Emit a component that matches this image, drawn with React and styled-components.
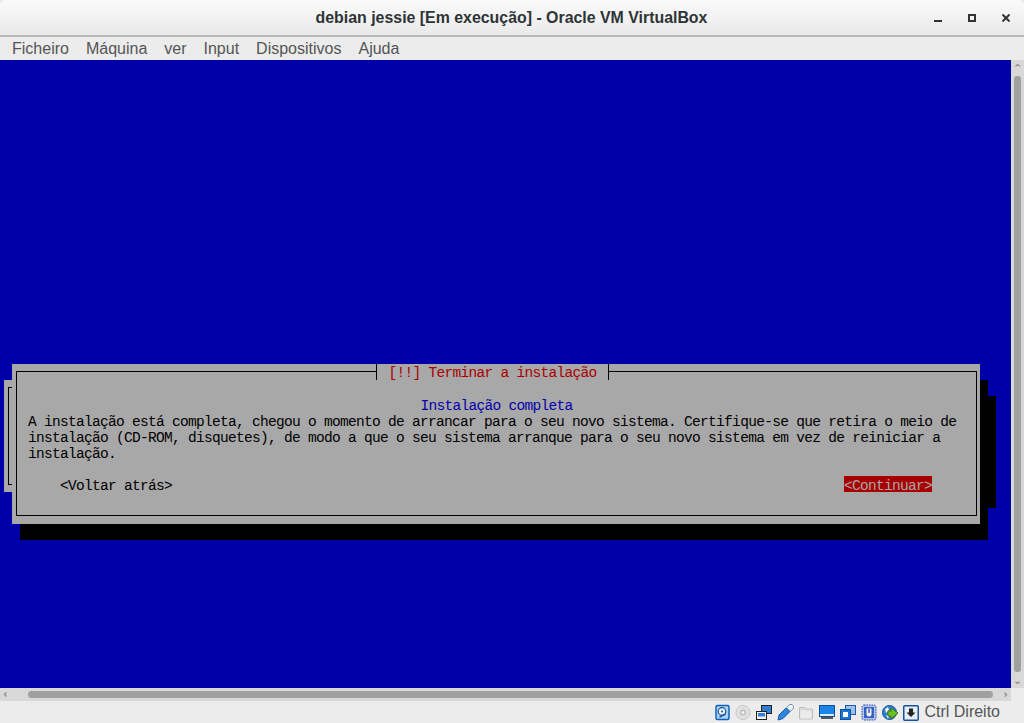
import styled, { createGlobalStyle } from 'styled-components';

const GlobalStyle = createGlobalStyle`
  html, body {
    margin: 0;
    padding: 0;
    height: 100%;
    overflow: hidden;
    background: #ececec;
  }
  #root {
    height: 100%;
  }
`;

const menuItems = ['Ficheiro', 'Máquina', 'ver', 'Input', 'Dispositivos', 'Ajuda'];

const bodyLines = [
  'A instalação está completa, chegou o momento de arrancar para o seu novo sistema. Certifique-se que retira o meio de',
  'instalação (CD-ROM, disquetes), de modo a que o seu sistema arranque para o seu novo sistema em vez de reiniciar a',
  'instalação.',
];

const HardDiskIcon = () => (
  <svg width="16" height="18" viewBox="0 0 16 18">
    <rect x="2" y="2.500" width="13" height="14" rx="1.500" fill="#a9d4f5" stroke="#0f62c0" strokeWidth="1.500" />
    <circle cx="8" cy="8.500" r="3.800" fill="#e6f3fc" stroke="#1c4f8c" strokeWidth="1.200" />
    <circle cx="8" cy="8.500" r="1" fill="#1c4f8c" />
    <path d="M5.500 14l6-3" stroke="#1c4f8c" strokeWidth="1.500" />
  </svg>
);

const DiscIcon = () => (
  <svg width="16" height="18" viewBox="0 0 16 18">
    <circle cx="8" cy="9.500" r="7" fill="#e4e4e4" stroke="#c4c4c4" />
    <circle cx="8" cy="9.500" r="4.500" fill="#d8d8d8" />
    <circle cx="8" cy="9.500" r="2" fill="#f6f6f6" stroke="#b0b0b0" />
  </svg>
);

const NetworkIcon = () => (
  <svg width="16" height="18" viewBox="0 0 16 18">
    <rect x="5.500" y="2.500" width="10" height="8" fill="#2f7fd6" stroke="#222" />
    <rect x="0.500" y="8.500" width="10" height="8" fill="#f2f2f2" stroke="#222" />
    <rect x="2" y="10" width="7" height="3.500" fill="#2f7fd6" />
  </svg>
);

const UsbIcon = () => (
  <svg width="17" height="18" viewBox="0 0 17 18">
    <path d="M1 17l1-5 7-7 4 3.500-7 7z" fill="#2f86e0" stroke="#1558a8" />
    <path d="M9.500 5l3-3.500h2.500l1.500 2v2l-3 2.700z" fill="#eef4fa" stroke="#6c8fb0" />
  </svg>
);

const FolderIcon = () => (
  <svg width="16" height="18" viewBox="0 0 16 18">
    <path d="M1.500 4.500h5l1 1.500h7v10h-13z" fill="#dcdcdc" stroke="#bdbdbd" />
    <rect x="2.500" y="7.500" width="11" height="8" fill="#ebebeb" />
  </svg>
);

const MonitorIcon = () => (
  <svg width="16" height="18" viewBox="0 0 16 18">
    <rect x="0.500" y="2.500" width="15" height="11" fill="#1a84e8" stroke="#0c4f9c" />
    <rect x="1" y="11" width="14" height="2" fill="#dcecfa" />
    <rect x="2" y="14" width="12" height="2" fill="#555" />
  </svg>
);

const DualDisplayIcon = () => (
  <svg width="16" height="18" viewBox="0 0 16 18">
    <rect x="5.500" y="2.500" width="10" height="9" fill="#9cc0ea" stroke="#1b5aa8" />
    <rect x="0.500" y="6.500" width="10" height="10" fill="#1a74d8" stroke="#0c4f9c" />
    <rect x="3" y="9" width="5" height="5" fill="#fff" />
  </svg>
);

const ChipIcon = () => (
  <svg width="16" height="18" viewBox="0 0 16 18">
    <rect x="1" y="2" width="14" height="15" rx="2" fill="#b4c6ee" stroke="#2748a8" strokeDasharray="1.500 1" />
    <rect x="3" y="4" width="10" height="11" fill="#3460c0" />
    <path d="M5.500 5.500v5.500a2.500 2.500 0 0 0 5 0V5.500z" fill="#f4f4f4" />
    <path d="M8 6v4" stroke="#3460c0" strokeWidth="1.500" />
  </svg>
);

const GlobeIcon = () => (
  <svg width="17" height="18" viewBox="0 0 17 18">
    <circle cx="7.500" cy="9.500" r="7" fill="#2f7fd0" stroke="#14539c" />
    <path d="M3 6l3-2 1 3-3 3zM4 12l3 1-1 3z" fill="#e8f0e8" />
    <path d="M9 5l7 5-7 6v-3H6V8h3z" fill="#6cc020" stroke="#3c7a10" />
  </svg>
);

const CaptureIcon = () => (
  <svg width="16" height="18" viewBox="0 0 16 18">
    <rect x="0.750" y="2.750" width="14.500" height="14.500" rx="1" fill="#e8eef5" stroke="#14539c" strokeWidth="1.500" />
    <path d="M6 5.500h4v4h2.500L8 14 3.500 9.500H6z" fill="#222" />
  </svg>
);

const statusIcons = [HardDiskIcon, DiscIcon, NetworkIcon, UsbIcon, FolderIcon, MonitorIcon, DualDisplayIcon, ChipIcon, GlobeIcon, CaptureIcon];

const App = () => {
  return (
    <Window>
      <GlobalStyle />
      <TitleBar>
        <WindowTitle>debian jessie [Em execução] - Oracle VM VirtualBox</WindowTitle>
        <WindowControls>
          <svg width="8" height="8" viewBox="0 0 8 8"><rect y="6" width="8" height="2" fill="#333" /></svg>
          <svg width="8" height="8" viewBox="0 0 8 8"><rect x="1" y="1" width="6" height="6" fill="none" stroke="#333" strokeWidth="2" /></svg>
          <svg width="8" height="8" viewBox="0 0 8 8"><path d="M0.500 0.500l7 7M7.500 0.500l-7 7" stroke="#333" strokeWidth="2" /></svg>
        </WindowControls>
      </TitleBar>
      <MenuBar>
        {menuItems.map((item) => <MenuItem key={item}>{item}</MenuItem>)}
      </MenuBar>
      <ViewArea>
        <Screen>
          <DialogStack>
            <BackDialog>
              <BackFrame />
            </BackDialog>
            <Dialog>
              <Frame>
                <DialogTitle>[!!] Terminar a instalação</DialogTitle>
                <Heading>Instalação completa</Heading>
                {bodyLines.map((line) => <Line key={line}>{line}</Line>)}
                <Buttons>
                  <ConsoleButton>&lt;Voltar atrás&gt;</ConsoleButton>
                  <ConsoleButton $active>&lt;Continuar&gt;</ConsoleButton>
                </Buttons>
              </Frame>
            </Dialog>
          </DialogStack>
        </Screen>
        <VScroll>
          <ScrollArrow>⌃</ScrollArrow>
          <VThumb />
          <ScrollArrow $down>⌃</ScrollArrow>
        </VScroll>
        <HScroll>
          <ScrollArrow $left>⌃</ScrollArrow>
          <HThumb />
          <ScrollArrow $right>⌃</ScrollArrow>
        </HScroll>
        <Corner />
      </ViewArea>
      <StatusBar>
        {statusIcons.map((Icon, i) => <Icon key={i} />)}
        <HostKey>Ctrl Direito</HostKey>
      </StatusBar>
    </Window>
  );
};

const Window = styled.div`
  width: 1024px;
  height: 723px;
  display: flex;
  flex-direction: column;
  background: #ececec;
  overflow: hidden;
`;

const TitleBar = styled.div`
  height: 35px;
  flex: none;
  display: flex;
  align-items: center;
  justify-content: center;
  position: relative;
  background: linear-gradient(#fbfbfb, #e9e9e9);
  border-bottom: 2px solid #b8b8b8;
  border-radius: 6px 6px 0 0;
`;

const WindowTitle = styled.div`
  font: bold 15.9px "Liberation Sans", Arial, sans-serif;
  color: #2e3436;
  padding-right: 1px;
`;

const WindowControls = styled.div`
  position: absolute;
  right: 14px;
  top: 14px;
  display: flex;
  gap: 26px;
`;

const MenuBar = styled.div`
  height: 23px;
  flex: none;
  display: flex;
  align-items: center;
  gap: 17px;
  padding-left: 12px;
  background: #ececec;
`;

const MenuItem = styled.span`
  font: 16px "Liberation Sans", Arial, sans-serif;
  color: #555;
`;

const ViewArea = styled.div`
  height: 641px;
  flex: none;
  display: grid;
  grid-template-columns: 1011px 13px;
  grid-template-rows: 628px 13px;
`;

const Screen = styled.div`
  background: #0000a8;
  padding: 304px 0 0 12px;
  overflow: hidden;
`;

const DialogStack = styled.div`
  position: relative;
  width: 968px;
  z-index: 0;
`;

const BackDialog = styled.div`
  position: absolute;
  z-index: -1;
  left: -8px;
  top: 16px;
  width: 984px;
  height: 112px;
  background: #a8a8a8;
  box-shadow: 8px 16px 0 #000;
  padding: 7px 4px;
  box-sizing: border-box;
`;

const BackFrame = styled.div`
  height: 98px;
  width: 8px;
  border: 1px solid #000;
  border-right: none;
  box-sizing: border-box;
`;

const Dialog = styled.div`
  height: 160px;
  box-sizing: border-box;
  background: #a8a8a8;
  box-shadow: 8px 16px 0 #000;
  padding: 7px 3px 8px 4px;
  font: 14.5px/16px "Liberation Mono", "DejaVu Sans Mono", monospace;
  letter-spacing: -0.7px;
  color: #000;
`;

const Frame = styled.div`
  position: relative;
  height: 145px;
  box-sizing: border-box;
  border: 1px solid #000;
  padding: 26px 0 0 11px;
`;

const DialogTitle = styled.div`
  position: absolute;
  top: -8px;
  left: 359px;
  width: 233px;
  height: 16px;
  box-sizing: border-box;
  padding-top: 1px;
  text-align: center;
  background: #a8a8a8;
  color: #a80000;
  border-left: 1px solid #000;
  border-right: 1px solid #000;
`;

const Heading = styled.div`
  text-align: center;
  color: #0000a8;
  padding-right: 11px;
`;

const Line = styled.div`
  white-space: pre;
`;

const Buttons = styled.div`
  display: flex;
  justify-content: space-between;
  margin-top: 14px;
  padding: 0 44px 0 32px;
`;

const ConsoleButton = styled.span`
  box-sizing: border-box;
  height: 16px;
  padding-top: 2px;
  background: ${(p) => (p.$active ? '#a80000' : 'transparent')};
  color: ${(p) => (p.$active ? '#a8a8a8' : '#000')};
`;

const VScroll = styled.div`
  display: flex;
  flex-direction: column;
  align-items: center;
  background: #d8d8d8;
`;

const HScroll = styled.div`
  display: flex;
  align-items: center;
  background: #d8d8d8;
`;

const Corner = styled.div`
  background: #ececec;
`;

const ScrollArrow = styled.span`
  flex: none;
  width: 13px;
  height: 13px;
  text-align: center;
  font: bold 11px/17px "DejaVu Sans", sans-serif;
  color: #8c8c8c;
  transform: rotate(${(p) => (p.$down ? 180 : p.$left ? -90 : p.$right ? 90 : 0)}deg);
`;

const VThumb = styled.div`
  flex: 1;
  width: 7px;
  margin: 3px 0;
  border-radius: 3px;
  background: #a0a0a0;
`;

const HThumb = styled.div`
  flex: 1;
  height: 7px;
  margin: 0 5px 0 15px;
  border-radius: 4px;
  background: #a0a0a0;
`;

const StatusBar = styled.div`
  flex: 1;
  display: flex;
  align-items: center;
  justify-content: flex-end;
  gap: 5px;
  padding-right: 24px;
  background: #ececec;

  & > svg:nth-child(4),
  & > svg:nth-child(9) {
    margin-right: -1px;
  }
`;

const HostKey = styled.span`
  font: 16px "Liberation Sans", Arial, sans-serif;
  color: #555;
`;

export default App;
